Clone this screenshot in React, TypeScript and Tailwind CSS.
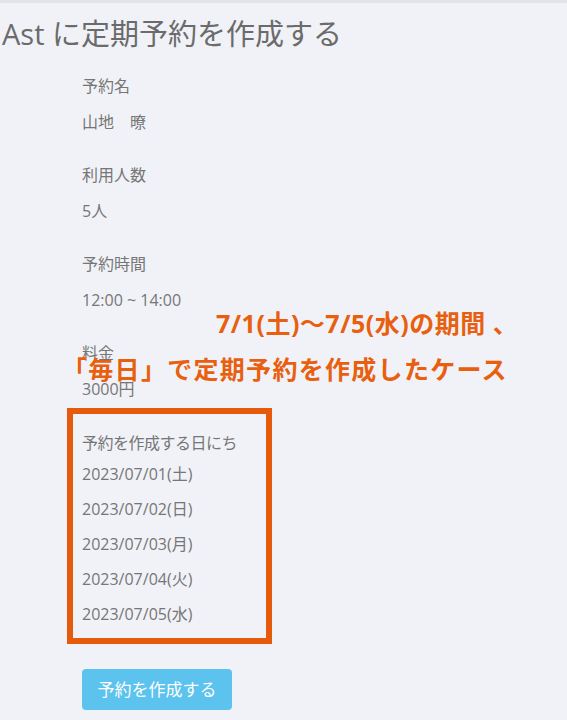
import React from 'react';

const dates = [
  '2023/07/01(土)',
  '2023/07/02(日)',
  '2023/07/03(月)',
  '2023/07/04(火)',
  '2023/07/05(水)',
];

const fields = [
  { label: '予約名', value: '山地　暸' },
  { label: '利用人数', value: '5人' },
  { label: '予約時間', value: '12:00 ~ 14:00' },
  { label: '料金', value: '3000円' },
];

const App: React.FC = () => {
  return (
    <div
      className="relative w-[567px] h-[720px] overflow-hidden bg-[#f1f2f7] border-t-[3px] border-[#e2e3e8] text-[#767676]"
      style={{ fontFamily: '"Open Sans", "Noto Sans CJK JP", sans-serif' }}
    >
      {/* Title */}
      <h1 className="pl-[2px] pt-[13px] text-[29px] leading-[36px] font-normal text-[#6b6b6b]">
        Ast に定期予約を作成する
      </h1>

      <div className="pl-[82px] pt-[16px]">
        {fields.map((f) => (
          <div key={f.label} className="mb-[17px] text-[16px]">
            <div className="leading-[36px]">{f.label}</div>
            <div className="leading-[36px]">{f.value}</div>
          </div>
        ))}

        {/* Dates box */}
        <div className="-ml-[15px] mt-[-16px] w-[205px] border-[6px] border-[#e65a0c] pl-[9px] pt-[15px] pb-[6px] text-[16px]">
          <div className="leading-[28px] tracking-[-0.5px]">予約を作成する日にち</div>
          {dates.map((d) => (
            <div key={d} className="leading-[35px]">{d}</div>
          ))}
        </div>

        <button className="mt-[25px] w-[150px] h-[41px] rounded-[4px] bg-[#5bc3ee] text-white text-[17px]">
          予約を作成する
        </button>
      </div>

      {/* Annotation */}
      <div className="absolute left-[216px] top-[304px] text-[25px] leading-[32px] font-bold text-[#e8600f] tracking-[0.5px]">
        7/1(土)〜7/5(水)の期間 、
      </div>
      <div className="absolute left-[62px] top-[350px] text-[25px] leading-[32px] font-bold text-[#e8600f] tracking-[1.3px]">
        「毎日」で定期予約を作成したケース
      </div>
    </div>
  );
};

export default App;
